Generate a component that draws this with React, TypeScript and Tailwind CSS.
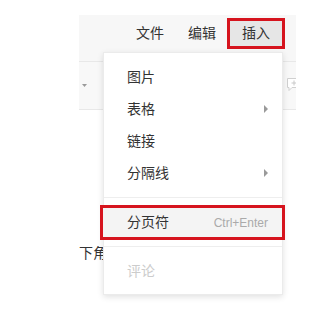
import React from "react";

const Arrow = () => (
  <svg width="4" height="8" viewBox="0 0 4 8" className="block">
    <path d="M0 0 L4 4 L0 8 Z" fill="#9a9a9a" />
  </svg>
);

export default function App() {
  const font = { fontFamily: '"Liberation Sans", "Noto Sans CJK SC", sans-serif' };
  return (
    <div className="relative w-[328px] h-[310px] bg-white overflow-hidden text-[14px] text-[#333]" style={font}>
      <div className="ml-[79px] mt-[15px] w-[217px]">
        <div className="h-[47px] bg-[#f7f7f7] border-b border-[#e8e8e8] flex justify-end items-start pt-[3px] pr-[11px]">
          <div className="w-[54px] h-[31px] flex items-center justify-center">文件</div>
          <div className="w-[50px] h-[31px] flex items-center justify-center">编辑</div>
          <div className="w-[58px] h-[31px] flex items-center justify-center border-[3px] border-[#d6141e] bg-[#e6e6e6]">插入</div>
        </div>
        <div className="h-[48px] bg-[#f8f8f8] border-b border-[#e8e8e8] flex items-center justify-between overflow-hidden pl-[3px]">
          <svg width="5" height="3" viewBox="0 0 5 3" className="block mt-[0px]">
            <path d="M0 0 L5 0 L2.5 3 Z" fill="#9a9a9a" />
          </svg>
          <svg width="14" height="13" viewBox="0 0 14 13" className="block mr-[-5px] mt-[-2px]">
            <path d="M0.5 0.5 H13.5 V9.5 H5 L2 12.5 V9.5 H0.5 Z" fill="#fff" stroke="#d0d0d0" />
            <path d="M7 2.5 V7.5 M4.5 5 H9.5" stroke="#c8c8c8" />
          </svg>
        </div>
        <div className="mt-[133px] leading-[20px]">下角</div>
      </div>

      <div className="absolute left-[103px] top-[52px] w-[180px] bg-white border border-[#ebebeb] shadow-[0_2px_6px_rgba(0,0,0,0.12)] pt-[8px] pb-[7px]">
        <div className="h-[32px] flex items-center pl-[23px] pr-[14px]">图片</div>
        <div className="h-[32px] flex items-center justify-between pl-[23px] pr-[14px]">
          <span>表格</span>
          <Arrow />
        </div>
        <div className="h-[32px] flex items-center pl-[23px] pr-[14px]">链接</div>
        <div className="h-[32px] flex items-center justify-between pl-[23px] pr-[14px]">
          <span>分隔线</span>
          <Arrow />
        </div>
        <div className="h-px bg-[#eeeeee] mt-[8px] mb-[7px]" />
        <div className="ml-[-4px] mr-[-3px] h-[35px] border-[3px] border-[#d6141e] bg-[#f4f4f4] flex items-center justify-between pl-[24px] pr-[14px]">
          <span>分页符</span>
          <span className="text-[12px] text-[#aaaaaa]">Ctrl+Enter</span>
        </div>
        <div className="h-px bg-[#eeeeee] mt-[6px] mb-[8px]" />
        <div className="h-[32px] flex items-center pl-[23px] pr-[14px] text-[#cccccc]">评论</div>
      </div>
    </div>
  );
}
